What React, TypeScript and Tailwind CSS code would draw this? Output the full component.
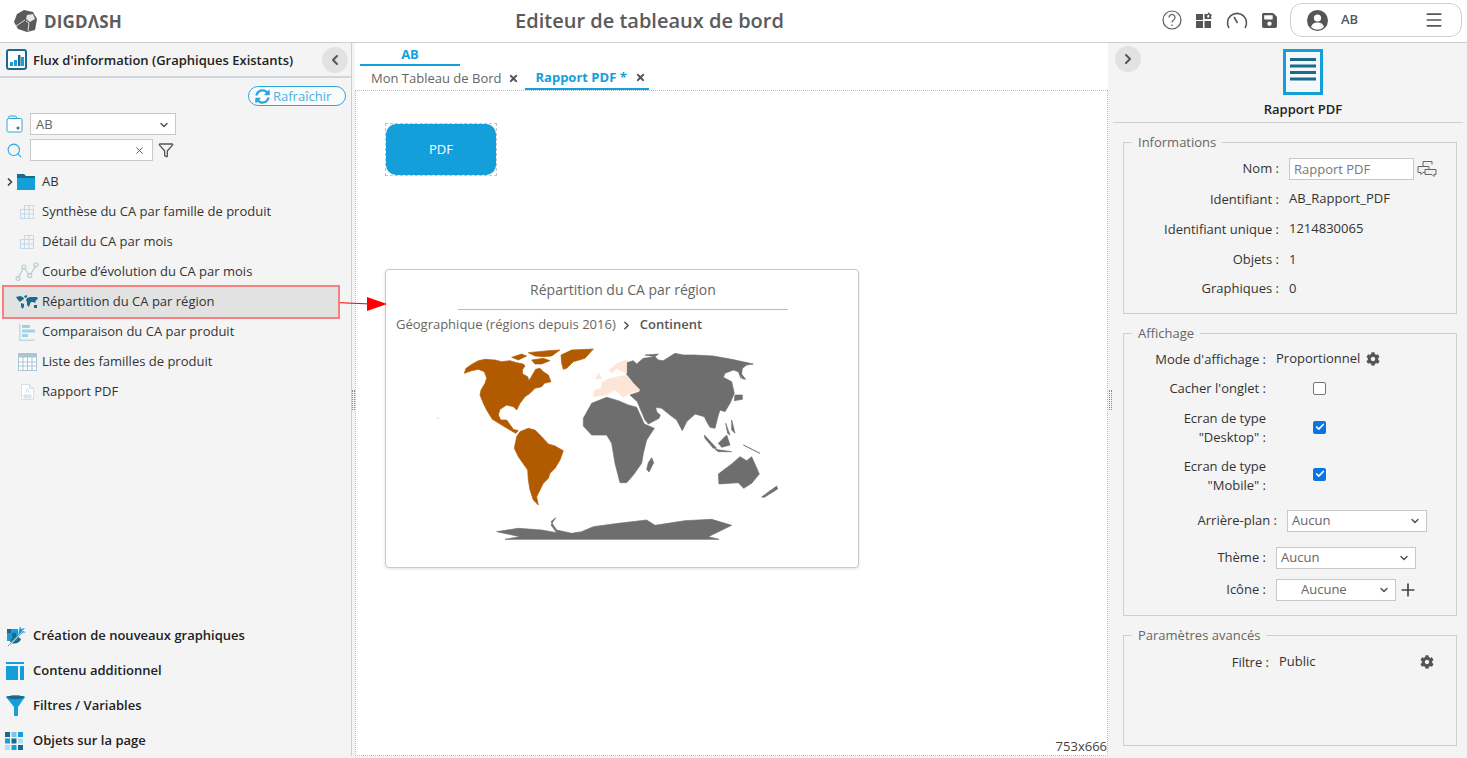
import React from "react";
import { ChevronLeft, ChevronRight, ChevronDown, Plus, Menu, Filter, Search, Check, X } from "lucide-react";
import { FaCog, FaSave, FaSyncAlt, FaTimes } from "react-icons/fa";

const treeItems = [
  { label: "Synthèse du CA par famille de produit", icon: "grid" },
  { label: "Détail du CA par mois", icon: "grid" },
  { label: "Courbe d’évolution du CA par mois", icon: "line" },
  { label: "Répartition du CA par région", icon: "map", active: true },
  { label: "Comparaison du CA par produit", icon: "bars" },
  { label: "Liste des familles de produit", icon: "table" },
  { label: "Rapport PDF", icon: "pdf" },
];

const GridIcon = () => (
  <svg width="16" height="16" viewBox="0 0 16 16" fill="none" stroke="#c3d8e3" strokeWidth="1">
    <path d="M5.500 1.500h9v13h-13v-9h4zM5.500 1.500v13M10 1.500v13M1.500 5.500h13M1.500 10h13" />
  </svg>
);

const LineIcon = () => (
  <svg width="24" height="20" viewBox="0 0 24 20" fill="none" stroke="#b5cbd6" strokeWidth="1.2">
    <path d="M3 16L8.500 6M9.500 6L14 13M15.500 12.500L20.500 4" />
    <circle cx="3" cy="16.500" r="2" />
    <circle cx="8.800" cy="5" r="2" />
    <circle cx="14.800" cy="13.500" r="2" />
    <circle cx="21" cy="3" r="2" />
  </svg>
);

const MapIcon = () => (
  <svg width="22" height="14" viewBox="0 0 22 14" fill="#1b6a8c">
    <path d="M0 2l4-1 3 1 1 2-3 2-1 1-2-2zM5 8l3 1 0 3-2 2-1-3zM8 1l3-1 0 2-2 1zM11 3l3-1 7 0 1 2-2 1-1 3-2-1-2 0-1 2-1 3-2-2 0-3-1-2zM18 10l3 0 0 3-3 0z" />
  </svg>
);

const BarsIcon = () => (
  <svg width="18" height="18" viewBox="0 0 18 18">
    <path d="M1 1h1.500v15.500H17V18H1z" fill="#c3dbe6" />
    <rect x="4" y="2" width="8" height="3" fill="#9fd2ea" />
    <rect x="4" y="6.500" width="13" height="3" fill="#9fd2ea" />
    <rect x="4" y="11" width="6" height="3" fill="#9fd2ea" />
  </svg>
);

const TableIcon = () => (
  <svg width="19" height="18" viewBox="0 0 19 18" fill="none">
    <rect x="0.500" y="0.500" width="18" height="17" fill="#fff" stroke="#a9c6d5" />
    <rect x="0.500" y="0.500" width="18" height="4" fill="#a9c6d5" />
    <path d="M0.500 9h18M0.500 13h18M5 4v14M9.500 4v14M14 4v14" stroke="#a9c6d5" />
  </svg>
);

const PdfIcon = () => (
  <svg width="13" height="16" viewBox="0 0 13 16" fill="#fff" stroke="#c9dbe4" strokeWidth="0.8">
    <path d="M0.500 0.500h8l4 4v11h-12zM8.500 0.500v4h4" />
    <path d="M3 11h7v3H3z" fill="#dde9ef" />
    <path d="M6.500 4L5 9M6.500 5l2 4" fill="none" />
  </svg>
);

const itemIcons: Record<string, React.ReactNode> = {
  grid: <GridIcon />,
  line: <LineIcon />,
  map: <MapIcon />,
  bars: <BarsIcon />,
  table: <TableIcon />,
  pdf: <PdfIcon />,
};

const Logo = () => (
  <svg width="24" height="24" viewBox="0 0 24 24">
    <path d="M10 1l9 2 4 7-2 11-8 2-9-3-4-7 3-8z" fill="#5a5a5a" />
    <path d="M13 6l6-1 2 5-5 3-4-3z" fill="#e8e8e8" />
    <path d="M12 12l3 2-1 8M11 11l-9 6" stroke="#fff" strokeWidth="0.8" fill="none" />
  </svg>
);

const TopBar = () => (
  <header className="h-[43px] shrink-0 flex items-center bg-white border-b border-[#cfcfcf] relative">
    <div className="w-[350px] pl-[14px] flex items-center gap-[6px]">
      <Logo />
      <span className="text-[17px] font-bold tracking-[0.2px] text-[#5c5c5c] leading-none">DIGDΛSH</span>
    </div>
    <div className="flex-1 text-center text-[20px] font-semibold text-[#5b5b5b] pr-[518px]">Editeur de tableaux de bord</div>
    <div className="absolute right-[5px] top-[3px] flex items-center">
      <div className="flex items-center gap-[13px] mr-[12px]">
        <svg width="20" height="20" viewBox="0 0 20 20" fill="none" stroke="#5a5a5a" strokeWidth="1.2">
          <circle cx="10" cy="10" r="9" />
          <path d="M7 7.500a3 3 0 1 1 4.600 2.500c-1 .7-1.600 1.200-1.600 2.600M10 14.500v1.600" />
        </svg>
        <svg width="18" height="18" viewBox="0 0 18 18" fill="#555">
          <path d="M1 3h7v6H1zM1 10h7v7H1zM9.500 10H16v7H9.500z" />
          <path d="M9.500 3h3l1.500-2 1 2 2 .5-1 2 .5 2.500h-7z" />
          <path d="M13.500 3.500l1 1.500-.5 1.500h-1.500l-.5-1.500z" fill="#fff" />
        </svg>
        <svg width="22" height="18" viewBox="0 0 22 18" fill="none" stroke="#555" strokeWidth="1.6">
          <path d="M3 17A9.500 9.500 0 1 1 19 17M8 6l3.500 6" />
        </svg>
        <FaSave size={17} color="#555" />
      </div>
      <div className="w-[172px] h-[34px] rounded-[12px] border border-[#cfcfcf] flex items-center pl-[16px] pr-[17px]">
        <svg width="21" height="21" viewBox="0 0 21 21">
          <circle cx="10.500" cy="10.500" r="10.500" fill="#555" />
          <circle cx="10.500" cy="8" r="3.600" fill="#fff" />
          <path d="M4 17c1-3.500 3.500-4.600 6.500-4.600S16 13.500 17 17a9 9 0 0 1-13 0z" fill="#fff" />
        </svg>
        <span className="ml-[13px] text-[13px] font-semibold text-[#555] flex-1">AB</span>
        <Menu size={20} color="#555" />
      </div>
    </div>
  </header>
);

const LeftPanel = () => (
  <aside className="w-[352px] shrink-0 bg-[#f4f4f4] border-r border-[#cfcfcf] flex flex-col text-[13px] text-[#333]">
    <div className="h-[35px] shrink-0 flex items-center pl-[6px] pr-[3px] border-b-2 border-[#d2d6da]">
      <svg width="21" height="21" viewBox="0 0 21 21" className="mr-[6px]">
        <rect x="1" y="1" width="19" height="19" rx="2" fill="#fff" stroke="#1b6a8c" strokeWidth="2" />
        <rect x="4" y="13" width="3" height="4" fill="#149fdb" />
        <rect x="8" y="11" width="3" height="6" fill="#149fdb" />
        <rect x="12" y="6" width="2.500" height="11" fill="#1b6a8c" />
        <rect x="15" y="8" width="3" height="9" fill="#149fdb" />
      </svg>
      <span className="flex-1 font-semibold text-[#222] mt-[3px]">Flux d'information (Graphiques Existants)</span>
      <span className="w-[26px] h-[26px] rounded-full bg-[#e2e2e2] flex items-center justify-center">
        <ChevronLeft size={16} strokeWidth={3} color="#555" />
      </span>
    </div>
    <div className="flex justify-end pr-[5px] pt-[8px]">
      <span className="w-[98px] h-[20px] rounded-full border border-[#2ba7df] flex items-center pl-[6px] gap-[3px] text-[#46b3e4] bg-white/60 pt-[1px]">
        <FaSyncAlt size={15} color="#2ba7df" />
        Rafraîchir
      </span>
    </div>
    <div className="flex items-center pl-[6px] mt-[7px]">
      <svg width="17" height="18" viewBox="0 0 17 18" fill="none" stroke="#2ba7df" className="mr-[7px]">
        <path d="M2.500 3.500V2.500a1.500 1.500 0 0 1 1.500-1.500h5a1.500 1.500 0 0 1 1.500 1.500v1" />
        <path d="M1 5a1.500 1.500 0 0 1 1.500-1.500h12A1.500 1.500 0 0 1 16 5v10.500a1.500 1.500 0 0 1-1.500 1.500h-12A1.500 1.500 0 0 1 1 15.500z" fill="#fff" />
        <circle cx="12" cy="13" r="1.500" fill="#666" stroke="none" />
      </svg>
      <div className="w-[146px] h-[22px] border border-[#c8c8c8] bg-white flex items-center px-[5px] text-[#666] pt-[1px]">
        <span className="flex-1">AB</span>
        <ChevronDown size={12} strokeWidth={3} color="#555" />
      </div>
    </div>
    <div className="flex items-center pl-[6px] mt-[4px]">
      <Search size={17} color="#2ba7df" strokeWidth={1.5} className="mr-[7px]" />
      <div className="w-[123px] h-[22px] border border-[#c8c8c8] bg-white flex items-center justify-end pr-[7px]">
        <X size={11} color="#555" />
      </div>
      <Filter size={16} color="#555" className="ml-[5px]" />
    </div>
    <div className="flex items-center h-[30px] mt-[6px] pl-[4px]">
      <ChevronRight size={12} strokeWidth={3.5} color="#444" />
      <svg width="18" height="16" viewBox="0 0 18 16" className="ml-[1px] mr-[7px]">
        <path d="M0 0h7l2 2h9v2H0z" fill="#1b6a8c" />
        <rect y="4" width="18" height="12" fill="#149fdb" />
      </svg>
      AB
    </div>
    {treeItems.map((item) => (
      <div
        key={item.label}
        className={
          item.active
            ? "h-[34px] -my-[2px] ml-[2px] mr-[11px] pl-[11px] flex items-center bg-[#e2e2e2] border-2 border-[#f58080] relative z-10"
            : "h-[30px] pl-[15px] flex items-center"
        }
      >
        <span className="w-[24px] shrink-0 flex items-center justify-center mr-[3px]">{itemIcons[item.icon]}</span>
        {item.label}
      </div>
    ))}
    <div className="mt-auto -mb-[2px] font-semibold text-[#222]">
      <div className="h-[35px] flex items-center pl-[6px]">
        <svg width="21" height="22" viewBox="0 0 21 22" className="mr-[6px]">
          <path d="M1 4h11v12H1z" fill="#149fdb" />
          <path d="M1 4h4v4H1zM6 8h4v4H6z" fill="#1b6a8c" />
          <path d="M14 1l1 3 4-1-3 3 4 1-8 3z" fill="#149fdb" />
          <path d="M4 17a7 7 0 0 1 7-6l4 3a7 7 0 0 1-11 3z" fill="#1b6a8c" />
          <path d="M2 21L18 6" stroke="#f4f4f4" strokeWidth="1.500" />
          <path d="M2 21L18 6" stroke="#1b6a8c" strokeWidth="0.700" />
        </svg>
        Création de nouveaux graphiques
      </div>
      <div className="h-[35px] flex items-center pl-[6px]">
        <svg width="18" height="18" viewBox="0 0 18 18" className="mr-[9px]">
          <rect width="18" height="2" fill="#149fdb" />
          <rect y="4" width="12" height="14" fill="#149fdb" />
          <rect x="14" y="4" width="4" height="14" fill="#149fdb" />
        </svg>
        Contenu additionnel
      </div>
      <div className="h-[35px] flex items-center pl-[6px]">
        <svg width="19" height="21" viewBox="0 0 19 21" className="mr-[8px]">
          <path d="M0 2C3 0 16 0 19 2L12 12V21H8V12z" fill="#149fdb" />
          <path d="M0 2C4 5 15 5 19 2C16 0 3 0 0 2z" fill="#1b6a8c" />
        </svg>
        Filtres / Variables
      </div>
      <div className="h-[35px] flex items-center pl-[5px]">
        <svg width="18" height="18" viewBox="0 0 18 18" className="mr-[10px]">
          <rect x="0" y="0" width="5" height="5" fill="#1b6a8c" />
          <rect x="6.500" y="0" width="5" height="5" fill="#7cc5e8" />
          <rect x="13" y="0" width="5" height="5" fill="#149fdb" />
          <rect x="0" y="6.500" width="5" height="5" fill="#149fdb" />
          <rect x="6.500" y="6.500" width="5" height="5" fill="#1b6a8c" />
          <rect x="13" y="6.500" width="5" height="5" fill="#b2dcf0" />
          <rect x="0" y="13" width="5" height="5" fill="#b2dcf0" />
          <rect x="6.500" y="13" width="5" height="5" fill="#149fdb" />
          <rect x="13" y="13" width="5" height="5" fill="#1b6a8c" />
        </svg>
        Objets sur la page
      </div>
    </div>
  </aside>
);

const Splitter = ({ className }: { className: string }) => (
  <div className={`shrink-0 bg-[#f4f4f4] flex items-center justify-center ${className}`}>
    <div className="w-[3px] h-[20px] border-x border-dotted border-[#888]" />
  </div>
);

// traced from the chart, coordinates are 3x the drawn size
const WorldMap = () => (
  <svg width="420" height="210" viewBox="0 0 1260 630" strokeWidth="2" strokeLinejoin="round">
    <g fill="#6e6e6e" stroke="#6e6e6e">
      <path d="M725 68L745 62L755 72L775 55L810 50L820 60L835 62L870 40L895 45L930 45L985 48L1040 58L1105 72L1085 75L1072 85L1068 115L1060 95L1045 90L1020 100L1015 112L1040 125L1048 160L1035 190L1020 215L1005 210L1000 225L990 265L975 262L965 245L958 230L930 222L905 245L892 272L875 240L855 225L830 205L812 202L815 215L826 226L822 235L790 252L780 240L765 205L757 185L735 165L765 155L745 130L725 105Z" />
      <path d="M595 235L620 190L665 172L700 182L730 195L755 202L778 252L808 265L785 300L775 340L770 370L745 405L725 428L705 428L690 370L680 310L665 285L620 285L595 258Z" />
      <path d="M800 353L806 368L792 396L785 388L790 368Z" />
      <path d="M1000 402L1040 372L1065 350L1085 362L1100 350L1123 402L1100 430L1076 445L1060 428L1002 432Z" />
      <path d="M1130 471L1175 438L1178 447L1138 472Z" />
      <path d="M1000 310L1025 285L1035 315L1010 322Z" />
      <path d="M958 285L995 325L985 325L960 295Z" />
      <path d="M990 328L1040 335L1000 335Z" />
      <path d="M1075 315L1125 340L1095 325Z" />
      <path d="M1040 240L1050 280L1040 270ZM1022 250L1035 285L1028 280Z" />
      <path d="M1050 165L1072 165L1072 178L1048 182Z" />
      <path d="M1068 100L1082 118L1072 116Z" />
      <path d="M780 45L820 42L810 50Z" />
      <path d="M335 575L400 565L470 570L515 578L498 555L512 533L498 545L515 570L560 580L590 575L625 560L700 550L785 540L810 556L900 542L980 538L1040 556L970 590L1002 598H360L405 590Z" />
    </g>
    <g fill="#b25a00" stroke="#b25a00">
      <path d="M238 100L243 85L262 72L280 62L300 58L330 60L350 65L375 62L395 68L415 72L420 78L412 90L413 102L428 110L432 122L445 100L452 88L465 85L475 95L490 105L498 125L478 130L470 140L450 145L435 160L420 170L405 190L395 210L385 200L365 195L345 208L340 225L347 240L365 240L372 250L385 268L400 272L392 280L375 270L350 255L322 238L305 210L295 190L285 165L288 150L300 130L305 115L298 95L280 88L260 92Z" />
      <path d="M395 290L405 275L430 265L450 270L470 290L490 312L510 318L535 332L525 360L510 385L495 400L490 415L475 430L465 450L455 470L460 495L445 480L435 450L430 420L428 390L400 350L388 325Z" />
      <path d="M528 45L560 30L625 27L600 55L565 65L545 85L535 88L530 70Z" />
      <path d="M380 52L410 42L425 48L400 60ZM430 38L490 32L525 30L500 48L475 50L450 48ZM440 60L475 55L495 62L470 72L450 72Z" />
    </g>
    <g fill="#fde6d6" stroke="#fde6d6">
      <path d="M625 170L628 152L650 145L650 128L675 115L725 105L745 130L765 150L735 160L715 172L690 150L660 165Z" />
      <path d="M680 100L672 90L700 68L725 60L725 100L695 85Z" />
      <path d="M640 100L650 115L632 118Z" />
      <path d="M156 233h6v4h-6z" />
    </g>
  </svg>
);

const Canvas = () => (
  <main className="flex-1 min-w-0 bg-white flex flex-col text-[13px]">
    <div className="h-[47px] shrink-0 pl-[5px]">
      <div className="w-[100px] h-[23px] border-b-2 border-[#149fdb] text-center font-bold text-[#149fdb] leading-[22px]">AB</div>
      <div className="flex items-center h-[24px]">
        <span className="pl-[11px] text-[#666] pt-[2px]">Mon Tableau de Bord</span>
        <FaTimes size={11} color="#555" className="ml-[7px] mt-[1px]" />
        <span className="ml-[6px] w-[124px] h-[24px] border-b-2 border-[#149fdb] flex items-center pl-[10px] font-bold text-[#149fdb] pt-[1px]">
          Rapport PDF *
          <FaTimes size={11} color="#555" className="ml-[8px]" />
        </span>
      </div>
    </div>
    <div className="flex-1 relative border border-dotted border-[#bbb]">
      <div className="absolute left-[29px] top-[32px] w-[112px] h-[53px] border border-dashed border-[#c4c4c4]">
        <div className="w-full h-full rounded-[10px] bg-[#149fdb] text-white flex items-center justify-center pt-[1px]">PDF</div>
      </div>
      <div className="absolute left-[29px] top-[178px] w-[474px] h-[299px] bg-white border border-[#c9c9c9] rounded-[4px] shadow-[0_1px_3px_rgba(0,0,0,0.12)]">
        <div className="ml-[72px] mr-[70px] h-[40px] border-b border-[#bbb] text-center text-[14px] text-[#666] leading-[40px]">Répartition du CA par région</div>
        <div className="flex items-center h-[30px] pl-[10px] text-[#666]">
          Géographique (régions depuis 2016)
          <ChevronRight size={13} strokeWidth={3} color="#555" className="ml-[4px] mr-[7px]" />
          <span className="font-semibold text-[#555]">Continent</span>
        </div>
        <div className="absolute left-[-1px] top-[70px]">
          <WorldMap />
        </div>
      </div>
      <span className="absolute right-0 -bottom-[1px] text-[#444]">753x666</span>
    </div>
  </main>
);

const Legend = ({ children }: { children: React.ReactNode }) => (
  <legend className="ml-[8px] px-[6px] text-[13px] text-[#666] leading-[18px]">{children}</legend>
);

const Row = ({ label, labelClass, rowClass, children }: { label: React.ReactNode; labelClass: string; rowClass: string; children?: React.ReactNode }) => (
  <div className={`flex items-center ${rowClass}`}>
    <div className={`text-right shrink-0 leading-[19px] ${labelClass}`}>{label}</div>
    {children}
  </div>
);

const Dropdown = ({ text, className }: { text: string; className: string }) => (
  <div className={`h-[22px] border border-[#c8c8c8] bg-white flex items-center pr-[5px] text-[#666] ${className}`}>
    <span className="flex-1">{text}</span>
    <ChevronDown size={12} strokeWidth={3} color="#555" />
  </div>
);

const Checkbox = ({ checked, className }: { checked?: boolean; className?: string }) => (
  <span
    className={
      checked
        ? `ml-[47px] w-[13px] h-[13px] rounded-[2px] bg-[#0b74e5] flex items-center justify-center ${className}`
        : "ml-[47px] w-[13px] h-[13px] rounded-[2px] border border-[#767676] bg-white"
    }
  >
    {checked && <Check size={10} color="#fff" strokeWidth={4} />}
  </span>
);

const RightPanel = () => (
  <aside className="w-[354px] shrink-0 bg-[#f4f4f4] text-[13px] text-[#333] flex flex-col relative">
    <span className="absolute left-[2px] top-[3px] w-[26px] h-[26px] rounded-full bg-[#e2e2e2] flex items-center justify-center">
      <ChevronRight size={16} strokeWidth={3} color="#555" />
    </span>
    <div className="h-[80px] shrink-0 flex flex-col items-center pl-[30px] mr-[4px] border-b border-[#d0d0d0]">
      <svg width="40" height="46" viewBox="0 0 40 46" className="mt-[6px]">
        <rect x="1.500" y="1.500" width="37" height="43" fill="#f4f8fa" stroke="#149fdb" strokeWidth="3" />
        <path d="M7 10.500h26M7 17h26M7 23.500h26M7 30h26" stroke="#1b6a8c" strokeWidth="3" />
      </svg>
      <span className="font-semibold text-[#222] mt-[5px] leading-[18px]">Rapport PDF</span>
    </div>
    <fieldset className="mx-[10px] mt-[10px] h-[181px] border border-[#cfcfcf]">
      <Legend>Informations</Legend>
      <div className="pt-[3px]">
        <Row label="Nom :" labelClass="w-[155px] -mt-[2px]" rowClass="h-[30px]">
          <div className="ml-[10px] w-[125px] h-[22px] border border-[#c8c8c8] bg-white px-[4px] leading-[20px] text-[#777]">Rapport PDF</div>
          <svg width="20" height="18" viewBox="0 0 20 18" fill="none" stroke="#666" className="ml-[3px]">
            <path d="M6 6V1.500h9v3M1 6.500h11v6H6l-2 2v-2H1z" fill="#eee" />
            <path d="M8 9.500h11v5h-2v2l-2-2H8z" fill="#eee" />
          </svg>
        </Row>
        <Row label="Identifiant :" labelClass="w-[155px]" rowClass="h-[30px]"><span className="ml-[10px]">AB_Rapport_PDF</span></Row>
        <Row label="Identifiant unique :" labelClass="w-[155px]" rowClass="h-[30px]"><span className="ml-[10px]">1214830065</span></Row>
        <Row label="Objets :" labelClass="w-[155px]" rowClass="h-[29px] mt-[1px]"><span className="ml-[10px]">1</span></Row>
        <Row label="Graphiques :" labelClass="w-[155px]" rowClass="h-[29px]"><span className="ml-[10px]">0</span></Row>
      </div>
    </fieldset>
    <fieldset className="mx-[10px] mt-[10px] h-[292px] border border-[#cfcfcf]">
      <Legend>Affichage</Legend>
      <div className="pt-[2px]">
        <Row label="Mode d'affichage :" labelClass="w-[142px]" rowClass="h-[30px]">
          <span className="ml-[10px]">Proportionnel</span>
          <FaCog size={14} color="#555" className="ml-[6px]" />
        </Row>
        <Row label="Cacher l'onglet :" labelClass="w-[142px]" rowClass="h-[29px]"><Checkbox /></Row>
        <Row label={<>Ecran de type<br />"Desktop" :</>} labelClass="w-[142px]" rowClass="h-[48px] mt-[1px]"><Checkbox checked className="-mt-[2px]" /></Row>
        <Row label={<>Ecran de type<br />"Mobile" :</>} labelClass="w-[142px]" rowClass="h-[48px]"><Checkbox checked className="-mt-[4px]" /></Row>
        <Row label="Arrière-plan :" labelClass="w-[153px]" rowClass="h-[37px] mt-[2px]">
          <Dropdown text="Aucun" className="ml-[10px] w-[140px] pl-[4px]" />
        </Row>
        <Row label="Thème :" labelClass="w-[142px]" rowClass="h-[37px]">
          <Dropdown text="Aucun" className="ml-[10px] w-[140px] pl-[4px]" />
        </Row>
        <Row label="Icône :" labelClass="w-[142px]" rowClass="h-[27px]">
          <Dropdown text="Aucune" className="ml-[10px] w-[120px] pl-[24px]" />
          <Plus size={20} color="#444" strokeWidth={2} className="ml-[2px]" />
        </Row>
      </div>
    </fieldset>
    <fieldset className="mx-[10px] mt-[10px] h-[120px] border border-[#cfcfcf]">
      <Legend>Paramètres avancés</Legend>
      <div className="pt-[3px]">
        <Row label="Filtre :" labelClass="w-[145px]" rowClass="h-[30px]">
          <span className="ml-[10px] flex-1">Public</span>
          <FaCog size={14} color="#555" className="mr-[22px]" />
        </Row>
      </div>
    </fieldset>
  </aside>
);

export default function App() {
  return (
    <div className="h-[758px] w-[1467px] overflow-hidden flex flex-col bg-white relative font-['Open_Sans',sans-serif]">
      <TopBar />
      <div className="flex-1 flex min-h-0">
        <LeftPanel />
        <Splitter className="w-[3px]" />
        <Canvas />
        <Splitter className="w-[5px]" />
        <RightPanel />
      </div>
      <div className="h-[2px] shrink-0 bg-[#f4f4f4]" />
      {/* annotation arrow from the list row to the chart */}
      <svg className="absolute left-[335px] top-[295px]" width="55" height="18" viewBox="0 0 55 18">
        <path d="M0 7.500L36 9" stroke="#e00" strokeWidth="1" />
        <path d="M32 2L52 9L32 16z" fill="#f00" />
      </svg>
    </div>
  );
}
